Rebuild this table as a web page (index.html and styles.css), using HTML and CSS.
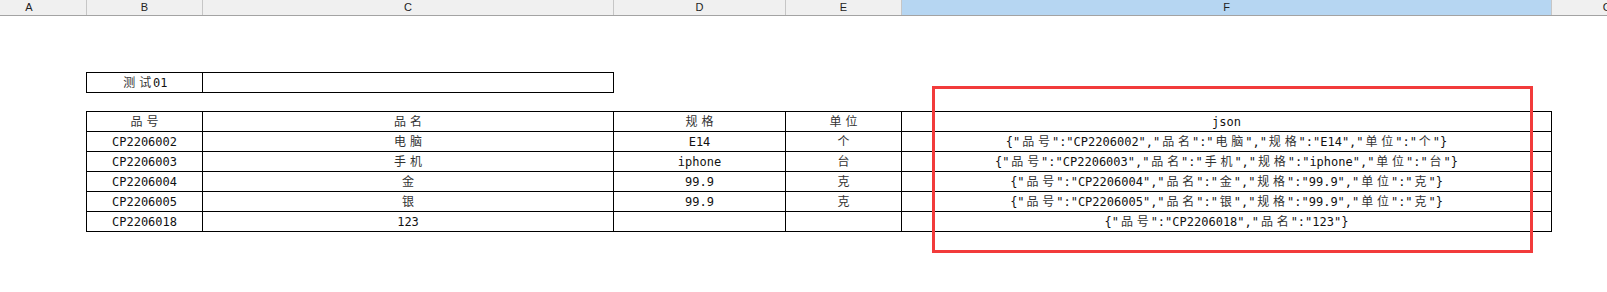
FILE: index.html
```html
<!DOCTYPE html>
<html>

<head>
    <meta charset="utf-8">
    <title>Sheet1</title>
    <link rel="stylesheet" href="styles.css">

    <script>
        var rows = [
            { "品号": "CP2206002", "品名": "电脑", "规格": "E14", "单位": "个" },
            { "品号": "CP2206003", "品名": "手机", "规格": "iphone", "单位": "台" },
            { "品号": "CP2206004", "品名": "金", "规格": "99.9", "单位": "克" },
            { "品号": "CP2206005", "品名": "银", "规格": "99.9", "单位": "克" },
            { "品号": "CP2206018", "品名": "123" }
        ];

        var fields = ["品号", "品名", "规格", "单位"];

        // chinese characters get their own span so they take a full cell width
        function zh(text) {
            return String(text).replace(/[\u3400-\u9fff]/g, '<span class="zh">$&</span>');
        }

        function drawTable() {
            var str = "<tr>";
            for (var f of fields) {
                str += `<td>${zh(f)}</td>`;
            }
            str += "<td>json</td></tr>";

            for (var row of rows) {
                str += "<tr>";
                for (var f of fields) {
                    str += `<td>${zh(row[f] || "")}</td>`;
                }
                str += `<td>${zh(JSON.stringify(row))}</td></tr>`;
            }
            document.querySelector("#data tbody").innerHTML = str;
            document.querySelector("#title td").innerHTML = zh("测试01");
        }
    </script>
</head>

<body onload="drawTable()">
    <div class="col-header">
        <div class="col a">A</div>
        <div class="col b">B</div>
        <div class="col c">C</div>
        <div class="col d">D</div>
        <div class="col e">E</div>
        <div class="col f selected">F</div>
        <div class="col g">G</div>
    </div>

    <div class="sheet">
        <table class="grid title" id="title">
            <colgroup>
                <col class="w-b">
                <col class="w-c">
            </colgroup>
            <tbody>
                <tr>
                    <td></td>
                    <td></td>
                </tr>
            </tbody>
        </table>

        <table class="grid data" id="data">
            <colgroup>
                <col class="w-b">
                <col class="w-c">
                <col class="w-d">
                <col class="w-e">
                <col class="w-f">
            </colgroup>
            <tbody>

            </tbody>
        </table>

        <div class="mark"></div>
    </div>
</body>

</html>
```

FILE: styles.css
```css
body {
    background-color: #ffffff;
    font-family: "DejaVu Sans Mono", "Noto Sans CJK SC", monospace;
    font-size: 12px;
    color: #111111;
    margin: 0;
    padding: 0;
}

/* column letters */

.col-header {
    display: flex;
    height: 15px;
    overflow: hidden;
    background-color: #f0f0f0;
    border-bottom: 1px solid #a3a3a3;
    font: 11px "Liberation Sans", Arial, sans-serif;
    color: #222222;
    line-height: 15px;
}

.col-header .col {
    box-sizing: border-box;
    border-right: 1px solid #c6c6c6;
    text-align: center;
    flex: none;
}

.col-header .a {
    width: 87px;
    padding-right: 28px;
}

.col-header .b { width: 116px; }
.col-header .c { width: 411px; }
.col-header .d { width: 172px; }
.col-header .e { width: 116px; }
.col-header .f { width: 650px; }
.col-header .g { width: 110px; border-right: none; }

.col-header .selected {
    background-color: #b6d6f2;
}

/* sheet */

.sheet {
    position: relative;
    height: 276px;
    padding: 56px 0 0 86px;
    box-sizing: border-box;
}

.grid {
    border-collapse: separate;
    border-spacing: 0;
    table-layout: fixed;
    border-left: 1px solid #000000;
    border-top: 1px solid #000000;
}

.grid td {
    box-sizing: border-box;
    height: 19px;
    padding: 0;
    border-right: 1px solid #000000;
    border-bottom: 1px solid #000000;
    text-align: center;
    white-space: nowrap;
    line-height: 18px;
}

.w-b { width: 116px; }
.w-c { width: 411px; }
.w-d { width: 172px; }
.w-e { width: 116px; }
.w-f { width: 650px; }

.title {
    width: 528px;
}

.data {
    width: 1466px;
    margin-top: 18px;
}

.zh {
    font-family: "Noto Sans CJK SC", sans-serif;
    color: #333333;
    margin-left: 1.9px;
    margin-right: -1.9px;
    letter-spacing: 3.8px;
}

/* red frame round the json column */

.mark {
    position: absolute;
    left: 932px;
    top: 70px;
    width: 601px;
    height: 167px;
    box-sizing: border-box;
    border: 3px solid #f23b3b;
}
```
